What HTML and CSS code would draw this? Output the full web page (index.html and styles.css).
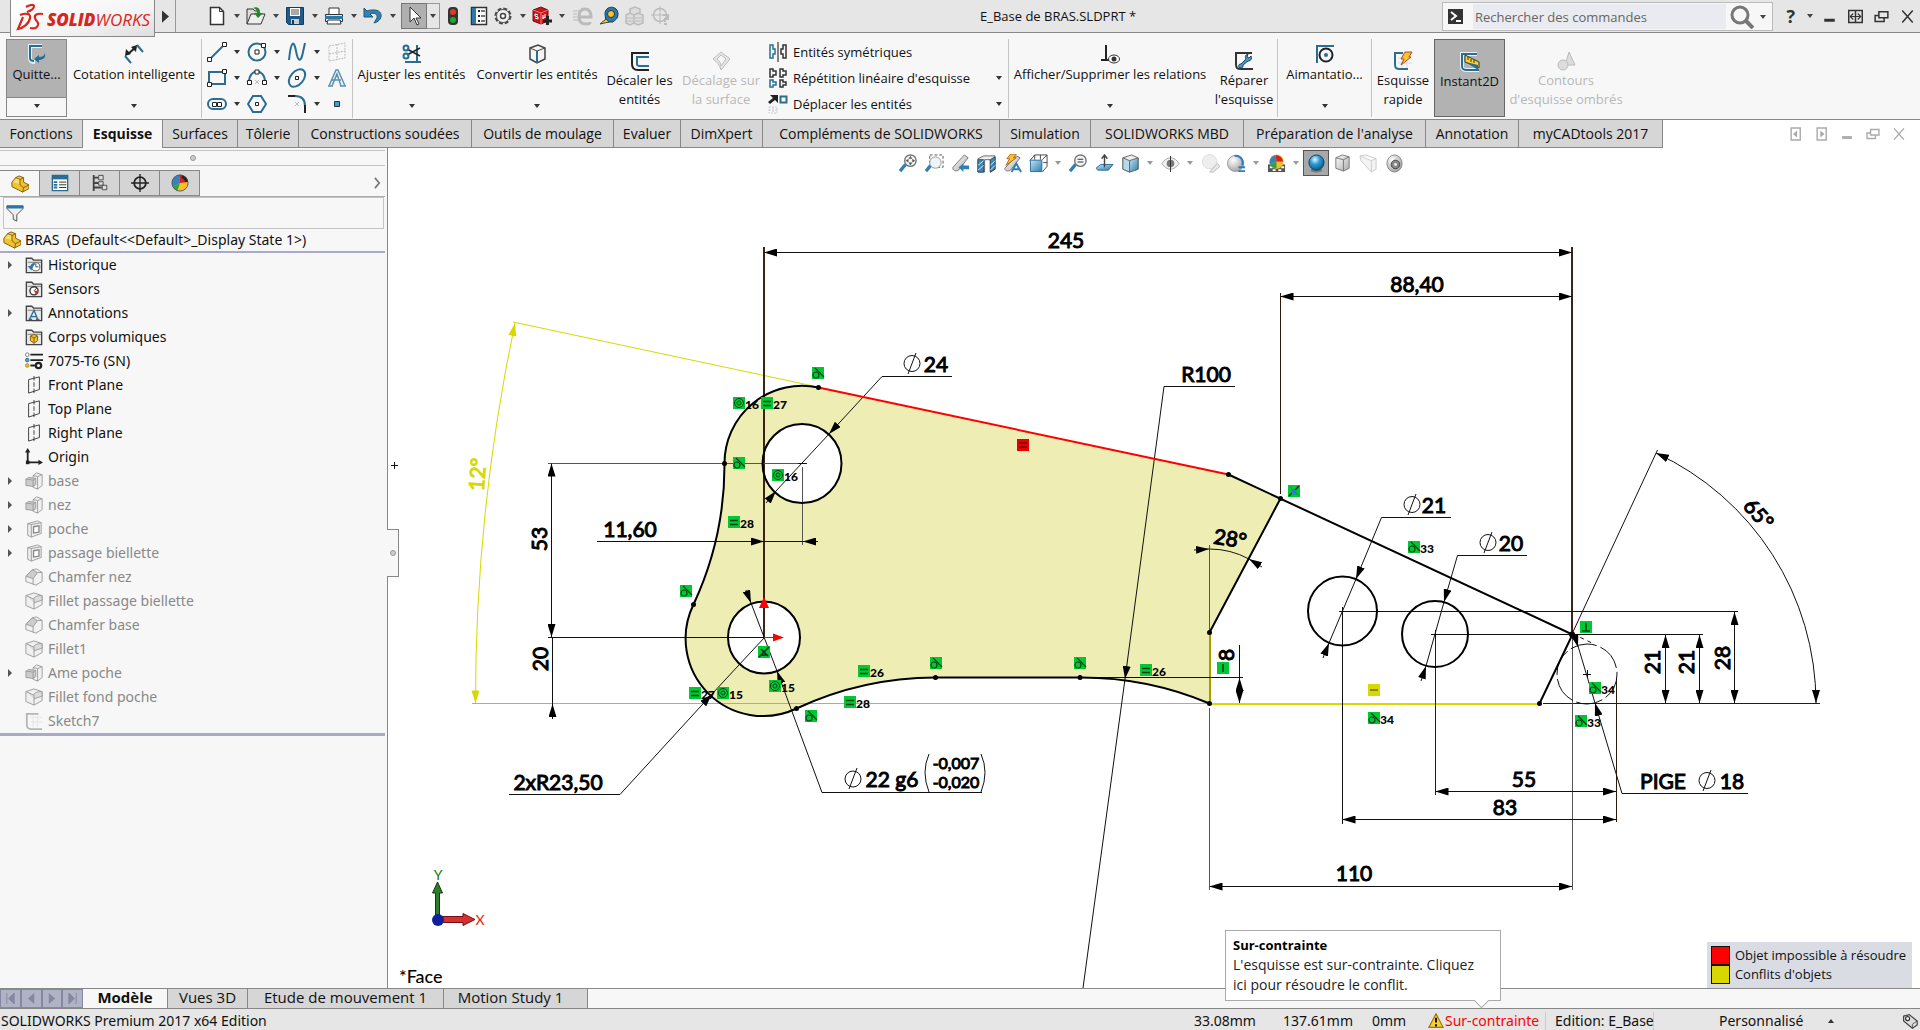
FILE: index.html
```html
<!DOCTYPE html>
<html lang="fr">
<head>
<meta charset="utf-8">
<title>E_Base de BRAS.SLDPRT</title>
<link rel="stylesheet" href="styles.css">
</head>
<body>
<svg class="defs" aria-hidden="true">
<defs>
<linearGradient id="metal" x1="0" y1="0" x2="1" y2="1"><stop offset="0" stop-color="#fff"/><stop offset="1" stop-color="#aaa"/></linearGradient>
<linearGradient id="sky" x1="0" y1="0" x2="1" y2="1"><stop offset="0" stop-color="#bfe4f7"/><stop offset="1" stop-color="#2b7fb0"/></linearGradient>
<radialGradient id="ball" cx=".4" cy=".3" r=".8"><stop offset="0" stop-color="#e8f8ff"/><stop offset=".4" stop-color="#2b9ad6"/><stop offset="1" stop-color="#054a7c"/></radialGradient>
<radialGradient id="gball" cx=".35" cy=".3" r=".8"><stop offset="0" stop-color="#fff"/><stop offset="1" stop-color="#999"/></radialGradient>
<symbol id="dd" viewBox="0 0 6 4"><path d="M0 0h6L3 4z" fill="currentColor"/></symbol>
<symbol id="new" viewBox="0 0 20 20"><path d="M3.500 1.500h9l4 4v13h-13z" fill="#fff" stroke="#333" stroke-width="1.500"/><path d="M12.500 1.500v4h4" fill="none" stroke="#333"/></symbol>
<symbol id="open" viewBox="0 0 20 20"><path d="M1 18V3h6l2 2h3v2" fill="#ddd" stroke="#333"/><path d="M1 18L5 8h14l-4 10z" fill="#eee" stroke="#333"/><path d="M7 2c5-2 7 0 7 5h3l-5 5-4-5h3c0-3-1-4-4-5z" fill="#1f8a1f"/></symbol>
<symbol id="save" viewBox="0 0 20 20"><path d="M1.500 1.500h17v17h-15l-2-2z" fill="#1f5a88" stroke="#133b5c"/><path d="M5 2h10v8H5z" fill="#fff"/><path d="M6 4h8M6 6h8M6 8h8" stroke="#555"/><path d="M6 13h8v5H6z" fill="#ccc"/><path d="M7 14h2v4H7z" fill="#133b5c"/></symbol>
<symbol id="print" viewBox="0 0 20 20"><path d="M5 8V2h10v6" fill="#fff" stroke="#333"/><path d="M1.500 8.500h17v7h-17z" fill="#e6e6e6" stroke="#333"/><path d="M1 10h18v3H1z" fill="#2b78ab"/><path d="M4 14h12l1 4H3z" fill="#fff" stroke="#333"/></symbol>
<symbol id="undo" viewBox="0 0 20 20"><path d="M1 2v9h9L7 8c4-2 8 0 7 4l-3 5c9-2 10-13 0-13-3 0-5 0-7 1z" fill="#3182b5" stroke="#1d5678"/></symbol>
<symbol id="cursor" viewBox="0 0 20 20"><path d="M6 1v15l4-4 3 7 2-1-3-6h5z" fill="#fff" stroke="#333"/></symbol>
<symbol id="light" viewBox="0 0 20 20"><rect x="5" y="1" width="10" height="18" rx="4" fill="#333"/><circle cx="10" cy="6" r="3" fill="#e03a28"/><circle cx="10" cy="14" r="3" fill="#27a52c"/></symbol>
<symbol id="list" viewBox="0 0 20 20"><path d="M2.500 1.500h15v17h-15z" fill="#fff" stroke="#333" stroke-width="1.500"/><path d="M3 2h4v16H3z" fill="#2b78ab"/><path d="M9 5h2M9 10h2M9 15h2" stroke="#222" stroke-width="2"/><path d="M12 5h4M12 10h4M12 15h4" stroke="#777" stroke-width="2"/></symbol>
<symbol id="gear" viewBox="0 0 20 20"><circle cx="10" cy="10" r="7.500" fill="none" stroke="#444" stroke-width="2" stroke-dasharray="4 1.900"/><circle cx="10" cy="10" r="6.500" fill="#f0f0f0" stroke="#555"/><circle cx="10" cy="10" r="2.500" fill="#fff" stroke="#444" stroke-width="1.500"/></symbol>
<symbol id="swcube" viewBox="0 0 20 20"><path d="M1 4l8-3 7 3v11l-7 3-8-3z" fill="#c8151b" stroke="#7a0c10"/><path d="M1 4l8 3 7-3M9 7v11" fill="none" stroke="#ee7a7a"/><path d="M6 9L3 8v2l3 1v2l-3-1M11 9v4l1-2 1 1v-4" fill="none" stroke="#fff"/><path d="M11 15h9M15.500 10v9" stroke="#222" stroke-width="3"/></symbol>
<symbol id="ee" viewBox="0 0 20 20"><path d="M7 11h11c0-5-2-8-6-8s-6 3-6 8 3 7 7 7 4-2 4-2" fill="none" stroke="#bbb" stroke-width="3"/><path d="M0 5h6M0 8h4M0 11h4M0 14h5" stroke="#bbb"/></symbol>
<symbol id="tape" viewBox="0 0 20 20"><path d="M6 8c0-9 13-9 13 0 0 5-3 6-5 8H7z" fill="#2b78ab" stroke="#133b5c"/><circle cx="12" cy="8" r="3.500" fill="#f5c431" stroke="#333"/><path d="M1 18l6-5 3 3z" fill="#f5c431" stroke="#444"/></symbol>
<symbol id="cubes" viewBox="0 0 20 20"><path d="M1 9l4-2 4 2v8l-4 2-4-2zM9 9l4-2 5 2v8l-5 2-4-2zM5 7V3l5-2 5 2v4" fill="#ddd" stroke="#bbb" stroke-width="1.500"/><path d="M2 12h6M2 15h6M10 12h7M10 15h7" stroke="#bbb"/></symbol>
<symbol id="target" viewBox="0 0 20 20"><circle cx="9" cy="9" r="6.500" fill="none" stroke="#bbb" stroke-width="1.500"/><path d="M9 0v18M0 9h18" stroke="#bbb"/><path d="M12 9h5v4h-3v3M13 18h3" fill="none" stroke="#bbb" stroke-width="2"/></symbol>

<symbol id="exit" viewBox="0 0 20 20"><path d="M15 2H3v12c0 3 1 4 5 4" fill="none" stroke="#e7f2f8" stroke-width="4"/><path d="M15 2H3v12c0 2 1 3 4 3" fill="none" stroke="#2a6d93" stroke-width="2"/><path d="M18 9c1 5-2 7-6 7v3l-5-4 5-4v2c3 0 5-1 6-4z" fill="#2a6d93"/></symbol>
<symbol id="smartdim" viewBox="0 0 20 20"><path d="M1 12l6 7M13 1l6 7" stroke="#2a6d93" stroke-width="2"/><path d="M4 10l8-7" stroke="#222" stroke-width="2"/><path d="M1 12l1-7 5 5zM13 1l-1 7-5-5z" fill="#222"/></symbol>
<symbol id="line" viewBox="0 0 20 20"><path d="M3 17L17 3" stroke="#2a6d93" stroke-width="2"/><path d="M.500 15.500h4v4h-4zM15.500.500h4v4h-4z" fill="#fff" stroke="#222"/></symbol>
<symbol id="circle" viewBox="0 0 20 20"><circle cx="10" cy="10" r="8.500" fill="none" stroke="#2a6d93" stroke-width="2"/><path d="M8 8h4v4H8zM14.500 1.500h4v4h-4z" fill="#fff" stroke="#222"/></symbol>
<symbol id="spline" viewBox="0 0 20 20"><path d="M2 18C4-2 7-2 9 9s5 12 7 1l2-9" fill="none" stroke="#2a6d93" stroke-width="2"/></symbol>
<symbol id="gplane" viewBox="0 0 20 20"><path d="M2 4l16-3v15L2 19zM10 2v16M2 12l16-3" fill="none" stroke="#bbb" stroke-dasharray="2 1"/></symbol>
<symbol id="rect" viewBox="0 0 20 20"><path d="M2 4h16v12H2z" fill="none" stroke="#2a6d93" stroke-width="2"/><path d="M.500 14.500h4v4h-4zM15.500 1.500h4v4h-4z" fill="#fff" stroke="#222"/></symbol>
<symbol id="arc" viewBox="0 0 20 20"><path d="M2 14C2 0 18 0 18 14" fill="none" stroke="#2a6d93" stroke-width="2"/><path d="M.500 12.500h4v4h-4zM15.500 12.500h4v4h-4zM8 2h4v4H8z" fill="#fff" stroke="#222"/><path d="M8 12l4 4m0-4l-4 4" stroke="#bbb"/></symbol>
<symbol id="ellipse" viewBox="0 0 20 20"><ellipse cx="10" cy="10" rx="10" ry="6.500" transform="rotate(-50 10 10)" fill="none" stroke="#2a6d93" stroke-width="2"/><path d="M8.500 8.500h3v3h-3z" fill="#fff" stroke="#222"/></symbol>
<symbol id="texta" viewBox="0 0 20 20"><path d="M2 18L9 2h2l7 16M1 18h5M13 18h6M5 12h9M5 18L10 6l4 12" fill="none" stroke="#5a93b5" stroke-width="1.500"/></symbol>
<symbol id="slot" viewBox="0 0 20 20"><rect x="1" y="5" width="18" height="10" rx="5" fill="none" stroke="#2a6d93" stroke-width="2"/><path d="M5.500 8.500h4v4h-4zM10.500 8.500h4v4h-4z" fill="#fff" stroke="#222"/></symbol>
<symbol id="hex" viewBox="0 0 20 20"><path d="M6 2h8l5 8-5 8H6l-5-8z" fill="none" stroke="#2a6d93" stroke-width="2"/><path d="M8.500 8.500h3v3h-3z" fill="#fff" stroke="#222"/></symbol>
<symbol id="fillet" viewBox="0 0 20 20"><path d="M1 2h8" stroke="#222" stroke-width="2"/><path d="M8 2c7 0 10 3 10 10" fill="none" stroke="#2a6d93" stroke-width="2"/><path d="M18 11v8" stroke="#222" stroke-width="2"/><path d="M8 8l4 4m0-4l-4 4" stroke="#bbb"/></symbol>
<symbol id="point" viewBox="0 0 20 20"><path d="M7.500 7.500h5v5h-5z" fill="#4a9cc8" stroke="#173a4e"/></symbol>
<symbol id="trim" viewBox="0 0 20 20"><path d="M3 18h16M15 1v18" stroke="#2a6d93" stroke-width="2"/><path d="M5 5l13 7M5 11l13-7" stroke="#222" stroke-width="1.500"/><circle cx="4" cy="4" r="2.500" fill="none" stroke="#2a6d93" stroke-width="2"/><circle cx="4" cy="12" r="2.500" fill="none" stroke="#2a6d93" stroke-width="2"/></symbol>
<symbol id="convert" viewBox="0 0 20 20"><path d="M3 4l8-3 7 3v11l-8 4-7-4z" fill="#f4f4f4" stroke="#444" stroke-width="1.500"/><path d="M3 4l7 3 8-3" fill="none" stroke="#444"/><path d="M10 7v12" stroke="#2a6d93" stroke-width="2"/></symbol>
<symbol id="offset" viewBox="0 0 20 20"><path d="M19 2H2v11c0 4 2 6 6 6h11" fill="none" stroke="#222" stroke-width="2"/><path d="M19 6H7v7c0 2 1 2 3 2h9" fill="none" stroke="#2a6d93" stroke-width="2"/></symbol>
<symbol id="offsurf" viewBox="0 0 20 20"><path d="M2 8l8-7 9 7-9 11C9 14 6 11 2 8z" fill="#e6e6e6" stroke="#bbb"/><path d="M6 8l4-4 5 4-5 7c0-3-2-5-4-7z" fill="#f7f7f7" stroke="#bbb"/></symbol>
<symbol id="mirror" viewBox="0 0 20 20"><path d="M10 0v20" stroke="#111"/><path d="M2 3h3v4h2v5H5v4H2z" fill="none" stroke="#2a6d93" stroke-width="1.500"/><path d="M18 3h-3v4h-2v5h2v4h3z" fill="none" stroke="#333" stroke-width="1.500"/></symbol>
<symbol id="pattern" viewBox="0 0 20 20"><path d="M2 1h3v2h3v4H5v2H2zM12 1h3v2h3v4h-3v2h-3zM12 12h3v2h3v3h-3v2h-3z" fill="none" stroke="#333" stroke-width="1.500"/><path d="M2 12h3v2h3v3H5v2H2z" fill="none" stroke="#2a6d93" stroke-width="1.500"/></symbol>
<symbol id="move" viewBox="0 0 20 20"><path d="M12.500 2.500h6v6h-6z" fill="#fff" stroke="#2a6d93" stroke-width="2"/><path d="M2 1h8v8L7 6l-5 4-2-2 5-4z" fill="#222"/><path d="M1 13h8v6H1zM5 13v6M1 16h8" fill="none" stroke="#ccc" stroke-dasharray="2 1"/></symbol>
<symbol id="rel" viewBox="0 0 20 20"><path d="M6 1v15M1 16h10" stroke="#222" stroke-width="2"/><ellipse cx="14" cy="15" rx="5.500" ry="4" fill="#fff" stroke="#333"/><circle cx="14" cy="15" r="2.500" fill="#333"/></symbol>
<symbol id="repair" viewBox="0 0 20 20"><path d="M18 2H2v11c0 4 1 5 5 5h12" fill="none" stroke="#333" stroke-width="2"/><path d="M14 3c-3 1-3 3-2 5l-5 5c-3 0-3 3-1 4 3 0 3-1 3-3l5-4c3 0 4-2 3-5l-2 2-2-1z" fill="#4a9cc8" stroke="#17445e"/></symbol>
<symbol id="snap" viewBox="0 0 20 20"><path d="M2 19V2h17" fill="none" stroke="#2a6d93" stroke-width="2"/><circle cx="11" cy="11" r="6.500" fill="none" stroke="#222" stroke-width="2"/><circle cx="11" cy="11" r="2" fill="#2a6d93"/></symbol>
<symbol id="rapid" viewBox="0 0 20 20"><path d="M5 7h14M5 12h14M9 3v16M14 3v16" stroke="#d5dde2"/><path d="M10 2H2v11c0 4 1 5 5 5h8" fill="none" stroke="#2a6d93" stroke-width="2"/><path d="M12 1h7l-3 5h2L8 14l3-6H8z" fill="#f5c431" stroke="#b4481f"/></symbol>
<symbol id="instant" viewBox="0 0 20 20"><path d="M17 2H2v12c0 3 1 4 5 4h12" fill="none" stroke="#e7f2f8" stroke-width="4"/><path d="M17 2H2v12c0 3 1 4 5 4h12" fill="none" stroke="#2a6d93" stroke-width="2"/><path d="M5 3l14 7v6L5 10z" fill="#f5d331" stroke="#333"/><path d="M8 5v3M11 7v3M14 8v3" stroke="#333"/><path d="M6 10l12 8v-5z" fill="#2a6d93"/></symbol>
<symbol id="shaded" viewBox="0 0 20 20"><path d="M13 1l6 13H9z" fill="#ddd" stroke="#bbb"/><circle cx="7" cy="14" r="5" fill="#ddd" stroke="#bbb"/></symbol>

<symbol id="part" viewBox="0 0 20 20"><path d="M1 8l4-5 4-2 5 2v5l6 3v4l-7 4L1 13z" fill="#f2c230" stroke="#7a5b0c"/><path d="M5 3l5 2 4-2M10 5v6l4 3 6-3M14 14l-1 5" fill="none" stroke="#7a5b0c"/><path d="M2 8l4-4 3 1v5z" fill="#f9dd71"/></symbol>
<symbol id="props" viewBox="0 0 20 20"><path d="M1.500 1.500h17v17h-17z" fill="#fff" stroke="#2a6d93" stroke-width="1.500"/><path d="M1 2h18v4H1z" fill="#2a6d93"/><path d="M3 9h4M3 12h4M3 15h4" stroke="#2a6d93" stroke-width="2"/><path d="M9 9h8M9 12h8M9 15h8" stroke="#222"/></symbol>
<symbol id="config" viewBox="0 0 20 20"><path d="M3 1v18M3 4h5M3 15h9M3 10h5" stroke="#444" stroke-width="2"/><path d="M8.500 1.500h5v5h-5zM8.500 8.500h5v4h-5zM12.500 12.500h5v5h-5z" fill="#ddd" stroke="#444"/></symbol>
<symbol id="dimx" viewBox="0 0 20 20"><circle cx="10" cy="10" r="6.500" fill="none" stroke="#222" stroke-width="2"/><path d="M10 0v20M0 10h20" stroke="#222" stroke-width="1.500"/></symbol>
<symbol id="disp" viewBox="0 0 20 20"><circle cx="10" cy="10" r="9" fill="#f3c02c"/><path d="M10 10L2 14A9 9 0 0 1 9 1z" fill="#3a7fc4"/><path d="M10 10L9 1a9 9 0 0 1 10 8z" fill="#d8201e"/><path d="M10 10l-8 4a9 9 0 0 0 5 5z" fill="#2da641"/><circle cx="10" cy="10" r="9" fill="none" stroke="#555"/><path d="M12 3c4 1 5 3 5 6" stroke="#222" stroke-width="3" fill="none"/></symbol>
<symbol id="funnel" viewBox="0 0 20 20"><path d="M1 2h18v3l-7 7v7l-4-2v-5L1 5z" fill="#eee" stroke="#444"/><path d="M1 2h18v3H1z" fill="#2a78a8"/></symbol>
<symbol id="folder" viewBox="0 0 20 20"><path d="M1.500 18.500v-16h6l2 2h9v14z" fill="#e8e8e8" stroke="#444" stroke-width="1.500"/><path d="M3 7h15" stroke="#777"/></symbol>
<symbol id="hist" viewBox="0 0 20 20"><use href="#folder"/><circle cx="12" cy="12" r="4.500" fill="#fff" stroke="#555"/><path d="M12 9v3h3" stroke="#444" fill="none"/><path d="M3 11l4 5 2-4c1-2 2-3 4-3-4-2-6 0-7 2z" fill="#2a78a8"/></symbol>
<symbol id="sens" viewBox="0 0 20 20"><use href="#folder"/><circle cx="10" cy="12" r="4.500" fill="#fff" stroke="#333" stroke-width="1.500"/><path d="M10 12l3-3" stroke="#222"/><path d="M10 12h4a4 4 0 0 1-2 4z" fill="#d8321e"/></symbol>
<symbol id="anno" viewBox="0 0 20 20"><use href="#folder"/><path d="M5 17l5-10 4 10M4 17h4M12 17h4M7 14h6" fill="none" stroke="#2a6d93" stroke-width="1.500"/></symbol>
<symbol id="body" viewBox="0 0 20 20"><use href="#folder"/><path d="M6 9l4-2 4 2v5l-4 3-4-3z" fill="#f2c230" stroke="#7a5b0c"/><path d="M6 9l4 2 4-2M10 11v6" stroke="#7a5b0c" fill="none"/></symbol>
<symbol id="mat" viewBox="0 0 20 20"><path d="M6 3h14M6 9h14M6 15h5" stroke="#222" stroke-width="2"/><circle cx="2.500" cy="3" r="2" fill="#fff" stroke="#777"/><circle cx="2.500" cy="9" r="2" fill="#4aa0d8" stroke="#2a6d93"/><circle cx="2.500" cy="15" r="2" fill="#f2c230" stroke="#b08a10"/><circle cx="15" cy="15" r="3" fill="none" stroke="#222" stroke-width="2.500"/></symbol>
<symbol id="plane" viewBox="0 0 20 20"><path d="M4 4l12-3v14L4 19z" fill="none" stroke="#333"/><path d="M10 0v20" stroke="#333" stroke-dasharray="5 2"/></symbol>
<symbol id="orig" viewBox="0 0 20 20"><path d="M3 3v13h13" fill="none" stroke="#222" stroke-width="2"/><path d="M0 5l3-5 3 5zM15 13l5 3-5 3z" fill="#222"/><path d="M1 14h4v4H1z" fill="#222"/></symbol>
<symbol id="boss" viewBox="0 0 20 20"><path d="M9 4l4-3 6 2v12l-5 4-5-2z" fill="#f2f2f2" stroke="#999"/><path d="M14 5l5-2M14 5v14M9 4l5 1" stroke="#999" fill="none"/><path d="M1 8l3-2 8 1v7l-3 2-8-1z" fill="#ccc" stroke="#999"/><path d="M1 8l8 1 3-2M9 9v7" stroke="#999" fill="none"/></symbol>
<symbol id="cut" viewBox="0 0 20 20"><path d="M3 4l11-3 4 2v12l-11 4-4-2z" fill="#eee" stroke="#999"/><path d="M7 5v14M3 4l4 1 11-2" stroke="#999" fill="none"/><path d="M9.500 7.500l6-1v7l-6 1z" fill="#fff" stroke="#888" stroke-width="1.500"/></symbol>
<symbol id="cham" viewBox="0 0 20 20"><path d="M1 9l7-7 5-1 6 4v10l-7 4-11-4z" fill="#f2f2f2" stroke="#999"/><path d="M1 9l7-7 6 3-5 7z" fill="#ccc" stroke="#999"/><path d="M9 12v6M14 5l5 0" stroke="#999"/></symbol>
<symbol id="fil" viewBox="0 0 20 20"><path d="M1 4l9-3 9 3v10l-9 5-9-4z" fill="#f0f0f0" stroke="#999"/><path d="M10 8v11M1 4l9 4c0-3 3-4 9-4v5l-9 3" fill="#ddd" stroke="#999"/></symbol>
<symbol id="sk" viewBox="0 0 20 20"><path d="M6 6h13M6 11h13M9 3v14M14 3v14" stroke="#e4e4e4"/><path d="M15 2H2v12c0 4 2 5 5 5h12" fill="none" stroke="#b5b5b5" stroke-width="2"/></symbol>

<symbol id="vfit" viewBox="0 0 20 20"><path d="M1 18l6-7" stroke="#2f7fb5" stroke-width="3.500"/><circle cx="12" cy="7" r="6" fill="#f3f6f8" stroke="#777" stroke-width="1.500"/><path d="M12 2l2 3h-4zM12 12l2-3h-4zM7 7l3-2v4zM17 7l-3-2v4z" fill="#555"/></symbol>
<symbol id="varea" viewBox="0 0 20 20"><path d="M5 1h14v13H5z" fill="none" stroke="#555" stroke-dasharray="3 2"/><path d="M1 18l5-6" stroke="#2f7fb5" stroke-width="3.500"/><circle cx="11" cy="9" r="6" fill="#eef4f8" stroke="#999"/></symbol>
<symbol id="vprev" viewBox="0 0 20 20"><path d="M2 14L14 1l4 3L8 17c-3 2-7 0-6-3z" fill="url(#metal)" stroke="#777"/><path d="M8 14l5-4v2h6v4h-6v3z" fill="#2f7fb5"/></symbol>
<symbol id="vsect" viewBox="0 0 20 20"><path d="M1 5l6-3 12 0v14l-5 3V6H8v13H1z" fill="#eee" stroke="#666"/><path d="M1 6h6v13H1zM14 6l5-3v13l-5 3z" fill="#3a88b8" stroke="#264f68"/><path d="M1 12l6-5M1 17l6-5M14 12l5-5M14 17l5-5" stroke="#d6e9f3"/></symbol>
<symbol id="vdyn" viewBox="0 0 20 20"><path d="M2 15L14 2l4 2L8 17c-3 2-7 0-6-2z" fill="url(#metal)" stroke="#777"/><path d="M8 0h6l-3 4h3L3 12l4-7H4z" fill="#f5c431" stroke="#b4661f"/><path d="M9 19l5-9 5 9M11 16h6" fill="none" stroke="#2f7fb5" stroke-width="2"/></symbol>
<symbol id="vorient" viewBox="0 0 20 20"><path d="M1 7l5-6h13v12l-5 6" fill="#fff" stroke="#444"/><path d="M14 6l5-5M6 1v5M12 1v5M15 9h4" stroke="#444"/><path d="M1.500 6.500h12v12h-12z" fill="url(#sky)" stroke="#2a6d93"/></symbol>
<symbol id="vsel" viewBox="0 0 20 20"><path d="M1 18l6-7" stroke="#2f7fb5" stroke-width="3.500"/><circle cx="12" cy="7" r="6" fill="#f3f6f8" stroke="#777" stroke-width="1.500"/><path d="M9 5h6v1H9zM9 8h6v1H9z" fill="#333"/></symbol>
<symbol id="vnorm" viewBox="0 0 20 20"><path d="M1 15l5-4h13l-5 6H3z" fill="url(#sky)" stroke="#2a6d93"/><path d="M10 14V2M7 5l3-4 3 4" fill="none" stroke="#444" stroke-width="1.500"/></symbol>
<symbol id="vcube" viewBox="0 0 20 20"><path d="M2 4l9-3 7 3v12l-9 3-7-3z" fill="#eee" stroke="#666"/><path d="M2 4l7 3v12l-7-3z" fill="#b7d9ea" stroke="#666"/><path d="M9 7l9-3v12l-9 3z" fill="url(#sky)" stroke="#666"/></symbol>
<symbol id="veye" viewBox="0 0 20 20"><path d="M1 10c5-8 13-8 18 0-5 8-13 8-18 0z" fill="#f1f1f1" stroke="#aaa"/><circle cx="10" cy="10" r="4" fill="#777"/><path d="M10 2v17" stroke="#333"/></symbol>
<symbol id="vpen" viewBox="0 0 20 20"><circle cx="9" cy="8" r="7.500" fill="#eee" stroke="#ddd"/><path d="M9 19l8-9 3 3-7 6z" fill="#e6e6e6" stroke="#bbb"/></symbol>
<symbol id="vscene" viewBox="0 0 20 20"><circle cx="9" cy="10" r="8.500" fill="url(#gball)" stroke="#999"/><path d="M8 2c7-1 10 6 8 10" fill="none" stroke="#2f7fb5" stroke-width="2"/><path d="M12 14h7M12 18h7" stroke="#2f7fb5" stroke-width="2"/></symbol>
<symbol id="vapp" viewBox="0 0 20 20"><path d="M1 11h18v8H1z" fill="#555"/><path d="M3 13h3v2H3zM9 13h3v2H9zM15 13h3v2h-3zM6 16h3v2H6zM12 16h3v2h-3z" fill="#fff"/><circle cx="10" cy="8" r="7.500" fill="#f3c02c"/><path d="M10 8L3 11A8 8 0 0 1 9 1z" fill="#3a7fc4"/><path d="M10 8L9 1a8 8 0 0 1 8 7z" fill="#d8201e"/><path d="M10 8l-7 3a8 8 0 0 0 7 4z" fill="#2da641"/></symbol>
<symbol id="vball" viewBox="0 0 20 20"><ellipse cx="10" cy="17" rx="6" ry="2.500" fill="#777"/><circle cx="10" cy="9" r="8" fill="url(#ball)" stroke="#0b4468"/></symbol>
<symbol id="vgray" viewBox="0 0 20 20"><path d="M3 4l7-3 7 2v12l-6 3-8-3z" fill="url(#metal)" stroke="#777"/><path d="M11 6v12M3 4l8 2 6-3" stroke="#777" fill="none"/></symbol>
<symbol id="vpersp" viewBox="0 0 20 20"><path d="M1 2l12 5v12L2 7zM13 7l5-2v11l-5 3M1 2l6-1 11 4" fill="#f3f3f3" stroke="#ccc"/></symbol>
<symbol id="vcam" viewBox="0 0 20 20"><ellipse cx="10" cy="10" rx="8" ry="9" fill="url(#gball)" stroke="#888"/><circle cx="11" cy="11" r="4.500" fill="#888" stroke="#444"/><circle cx="11" cy="11" r="1.500" fill="#eee"/></symbol>
<symbol id="warn" viewBox="0 0 20 20"><path d="M10 1l9 17H1z" fill="#f7cf2f" stroke="#a2780c" stroke-width="1.500"/><path d="M10 6v6M10 14v3" stroke="#111" stroke-width="2.500"/></symbol>
<symbol id="tag" viewBox="0 0 20 20"><path d="M2 4l7-2 10 8v5l-6 4L2 10z" fill="#ddd" stroke="#444" stroke-width="1.500"/><circle cx="7" cy="7" r="2.500" fill="#fff" stroke="#333" stroke-width="1.500"/><path d="M13 19v-5l6-4" fill="none" stroke="#444"/></symbol>
<symbol id="restore" viewBox="0 0 20 20"><path d="M6.500 3.500h12v8h-12zM6.500 8.500h-5v8h12v-5" fill="none" stroke="currentColor" stroke-width="2"/></symbol>
<symbol id="close" viewBox="0 0 20 20"><path d="M3 2l14 16M17 2L3 18" stroke="currentColor" stroke-width="2"/></symbol>
<symbol id="mini" viewBox="0 0 20 20"><path d="M3 13h14v4H3z" fill="currentColor"/></symbol>
<symbol id="span" viewBox="0 0 20 20"><path d="M1 2h18v16H1zM10 2v16" fill="none" stroke="currentColor" stroke-width="2"/><path d="M3 10h14M7 6l-4 4 4 4M13 6l4 4-4 4" fill="none" stroke="currentColor" stroke-width="1.500"/></symbol>

<marker id="ar" viewBox="0 0 13 8" refX="13" refY="4" markerWidth="13" markerHeight="8" markerUnits="userSpaceOnUse" orient="auto-start-reverse"><path d="M0 0l13 4-13 4z" fill="#000"/></marker>
<marker id="ay" viewBox="0 0 13 8" refX="13" refY="4" markerWidth="13" markerHeight="8" markerUnits="userSpaceOnUse" orient="auto-start-reverse"><path d="M0 0l13 4-13 4z" fill="#d8d800"/></marker>
<g id="b-tan"><path d="M0 0h12v12H0z" fill="#00c832"/><path d="M3 1l9 9" stroke="#143c1c" stroke-width="1.200"/><circle cx="4" cy="8" r="3" fill="none" stroke="#143c1c" stroke-width="1.200"/></g>
<g id="b-con"><path d="M0 0h12v12H0z" fill="#00c832"/><circle cx="6" cy="6" r="4.500" fill="none" stroke="#143c1c"/><circle cx="6" cy="6" r="2" fill="none" stroke="#143c1c"/></g>
<g id="b-eq"><path d="M0 0h12v12H0z" fill="#00c832"/><path d="M2 4.500h8M2 8.500h8" stroke="#143c1c" stroke-width="1.500"/></g>
<g id="b-coi"><path d="M0 0h12v12H0z" fill="#00c832"/><path d="M1 11L11 1M3 3l7 7M3 9h5" stroke="#0a2a10" stroke-width="1.500"/></g>
</defs>
</svg>

<header class="titlebar">
  <a class="logo" href="#" aria-label="SOLIDWORKS">
    <svg class="ds" viewBox="0 0 28 32" aria-hidden="true"><g fill="none" stroke="#d9261c" stroke-width="2.200"><path d="M10 5c3-2 8-3 8-1 0 3-4 5-7 6"/><path d="M4 13c5-2 11-2 10 3-1 6-7 10-12 11l5-12"/><path d="M27 12c-6-1-9 1-8 4 1 4 4 3 3 7-1 3-4 4-8 3"/></g></svg>
    <span class="wordmark"><b>SOLID</b>WORKS</span>
  </a>
  <button class="flyout" aria-label="Menu"><svg viewBox="0 0 8 14"><path d="M0 0l8 7-8 7z" fill="#333"/></svg></button>
  <nav class="quick" aria-label="Accès rapide">
    <button><svg><use href="#new"/></svg></button><button class="dd"><svg><use href="#dd"/></svg></button>
    <button><svg><use href="#open"/></svg></button><button class="dd"><svg><use href="#dd"/></svg></button>
    <button><svg><use href="#save"/></svg></button><button class="dd"><svg><use href="#dd"/></svg></button>
    <button><svg><use href="#print"/></svg></button><button class="dd"><svg><use href="#dd"/></svg></button>
    <button><svg><use href="#undo"/></svg></button><button class="dd"><svg><use href="#dd"/></svg></button>
    <button class="pressed"><svg><use href="#cursor"/></svg></button><button class="dd boxed"><svg><use href="#dd"/></svg></button>
    <button class="solo"><svg><use href="#light"/></svg></button>
    <button class="solo"><svg><use href="#list"/></svg></button>
    <button><svg><use href="#gear"/></svg></button><button class="dd"><svg><use href="#dd"/></svg></button>
    <button><svg><use href="#swcube"/></svg></button><button class="dd"><svg><use href="#dd"/></svg></button>
    <button class="solo"><svg><use href="#ee"/></svg></button>
    <button class="solo"><svg><use href="#tape"/></svg></button>
    <button class="solo"><svg><use href="#cubes"/></svg></button>
    <button class="solo"><svg><use href="#target"/></svg></button>
  </nav>
  <h1 class="doc">E_Base de BRAS.SLDPRT *</h1>
  <form class="search">
    <svg class="prompt" viewBox="0 0 15 15"><path d="M0 0h15v15H0z" fill="#333"/><path d="M3 3l5 4-5 4M8 12h5" fill="none" stroke="#fff" stroke-width="2"/></svg>
    <input type="text" placeholder="Rechercher des commandes" aria-label="Rechercher des commandes">
    <button type="button" class="go" aria-label="Rechercher"><svg viewBox="0 0 24 24"><circle cx="10" cy="10" r="8" fill="none" stroke="#777" stroke-width="3"/><path d="M16 16l7 7" stroke="#777" stroke-width="4"/></svg></button>
    <button type="button" class="dd" aria-label="Options"><svg><use href="#dd"/></svg></button>
  </form>
  <div class="winbtns">
    <button class="help">?</button><button class="dd"><svg><use href="#dd"/></svg></button>
    <button aria-label="Réduire"><svg><use href="#mini"/></svg></button><button aria-label="Étendre"><svg><use href="#span"/></svg></button><button aria-label="Restaurer"><svg><use href="#restore"/></svg></button><button aria-label="Fermer"><svg><use href="#close"/></svg></button>
  </div>
</header>

<section class="ribbon" aria-label="Esquisse">
  <button class="tool quit"><svg class="ic"><use href="#exit"/></svg><span>Quitte...</span><svg class="more"><use href="#dd"/></svg></button>
  <button class="tool w134"><svg class="ic"><use href="#smartdim"/></svg><span>Cotation intelligente</span><svg class="more"><use href="#dd"/></svg></button>
  <div class="palette">
    <button><svg class="ic"><use href="#line"/></svg><svg class="arrow"><use href="#dd"/></svg></button>
    <button><svg class="ic"><use href="#circle"/></svg><svg class="arrow"><use href="#dd"/></svg></button>
    <button><svg class="ic"><use href="#spline"/></svg><svg class="arrow"><use href="#dd"/></svg></button>
    <button><svg class="ic"><use href="#gplane"/></svg></button>
    <button><svg class="ic"><use href="#rect"/></svg><svg class="arrow"><use href="#dd"/></svg></button>
    <button><svg class="ic"><use href="#arc"/></svg><svg class="arrow"><use href="#dd"/></svg></button>
    <button><svg class="ic"><use href="#ellipse"/></svg><svg class="arrow"><use href="#dd"/></svg></button>
    <button><svg class="ic"><use href="#texta"/></svg></button>
    <button><svg class="ic"><use href="#slot"/></svg><svg class="arrow"><use href="#dd"/></svg></button>
    <button><svg class="ic"><use href="#hex"/></svg></button>
    <button><svg class="ic"><use href="#fillet"/></svg><svg class="arrow"><use href="#dd"/></svg></button>
    <button><svg class="ic"><use href="#point"/></svg></button>
  </div>
  <button class="tool w117"><svg class="ic"><use href="#trim"/></svg><span>Ajus<u>t</u>er les entités</span><svg class="more"><use href="#dd"/></svg></button>
  <button class="tool w134"><svg class="ic"><use href="#convert"/></svg><span>Convertir les entités</span><svg class="more"><use href="#dd"/></svg></button>
  <button class="tool two w71"><svg class="ic"><use href="#offset"/></svg><span>Décaler les<br>entités</span></button>
  <button class="tool two w92 off"><svg class="ic"><use href="#offsurf"/></svg><span>Décalage sur<br>la surface</span></button>
  <div class="rows">
    <button><svg class="ic"><use href="#mirror"/></svg><span>Entités symétriques</span></button>
    <button><svg class="ic"><use href="#pattern"/></svg><span>Répétition linéaire d'esquisse</span><svg class="arrow"><use href="#dd"/></svg></button>
    <button><svg class="ic"><use href="#move"/></svg><span>Déplacer les entités</span><svg class="arrow"><use href="#dd"/></svg></button>
  </div>
  <button class="tool w202"><svg class="ic"><use href="#rel"/></svg><span>Afficher/Supprimer les relations</span><svg class="more"><use href="#dd"/></svg></button>
  <button class="tool two w67 last"><svg class="ic"><use href="#repair"/></svg><span>Réparer<br>l'esquisse</span></button>
  <button class="tool w94 last"><svg class="ic"><use href="#snap"/></svg><span>Aimantatio...</span><svg class="more"><use href="#dd"/></svg></button>
  <button class="tool two w62"><svg class="ic"><use href="#rapid"/></svg><span>Esquisse<br>rapide</span></button>
  <button class="tool two w71 active"><svg class="ic"><use href="#instant"/></svg><span>Instant2D</span></button>
  <button class="tool two w122 off"><svg class="ic"><use href="#shaded"/></svg><span>Contours<br>d'esquisse ombrés</span></button>
</section>

<nav class="tabs">
  <div class="strip">
    <button>Fonctions</button><button class="on">Esquisse</button><button>Surfaces</button><button>Tôlerie</button><button>Constructions soudées</button><button>Outils de moulage</button><button>Evaluer</button><button>DimXpert</button><button>Compléments de SOLIDWORKS</button><button>Simulation</button><button>SOLIDWORKS MBD</button><button>Préparation de l'analyse</button><button>Annotation</button><button>myCADtools 2017</button>
  </div>
  <div class="docbtns">
    <button><svg viewBox="0 0 20 20"><path d="M4.500 1.500h13v17h-13z" fill="none" stroke="currentColor" stroke-width="2"/><path d="M13 5v10l-6-5z" fill="currentColor"/></svg></button>
    <button><svg viewBox="0 0 20 20"><path d="M4.500 1.500h13v17h-13z" fill="none" stroke="currentColor" stroke-width="2"/><path d="M9 5v10l6-5z" fill="currentColor"/></svg></button>
    <button><svg><use href="#mini"/></svg></button><button><svg><use href="#restore"/></svg></button><button><svg><use href="#close"/></svg></button>
  </div>
</nav>

<main class="work">
  <aside class="panel">
    <div class="grip"><i class="dot"></i></div>
    <div class="ptabs">
      <button class="on"><svg><use href="#part"/></svg></button><button><svg><use href="#props"/></svg></button><button><svg><use href="#config"/></svg></button><button><svg><use href="#dimx"/></svg></button><button><svg><use href="#disp"/></svg></button>
      <button class="next" aria-label="Suivant"><svg viewBox="0 0 8 14"><path d="M1 1l5 6-5 6" fill="none" stroke="#777" stroke-width="2"/></svg></button>
    </div>
    <label class="filter"><svg><use href="#funnel"/></svg><input type="text" aria-label="Filtre"></label>
    <div class="root"><svg><use href="#part"/></svg><span>BRAS&nbsp; (Default&lt;&lt;Default&gt;_Display State 1&gt;)</span></div>
    <ul class="tree">
      <li class="exp"><svg><use href="#hist"/></svg>Historique</li>
      <li><svg><use href="#sens"/></svg>Sensors</li>
      <li class="exp"><svg><use href="#anno"/></svg>Annotations</li>
      <li><svg><use href="#body"/></svg>Corps volumiques</li>
      <li><svg><use href="#mat"/></svg>7075-T6 (SN)</li>
      <li><svg><use href="#plane"/></svg>Front Plane</li>
      <li><svg><use href="#plane"/></svg>Top Plane</li>
      <li><svg><use href="#plane"/></svg>Right Plane</li>
      <li><svg><use href="#orig"/></svg>Origin</li>
      <li class="exp off"><svg><use href="#boss"/></svg>base</li>
      <li class="exp off"><svg><use href="#boss"/></svg>nez</li>
      <li class="exp off"><svg><use href="#cut"/></svg>poche</li>
      <li class="exp off"><svg><use href="#cut"/></svg>passage biellette</li>
      <li class="off"><svg><use href="#cham"/></svg>Chamfer nez</li>
      <li class="off"><svg><use href="#fil"/></svg>Fillet passage biellette</li>
      <li class="off"><svg><use href="#cham"/></svg>Chamfer base</li>
      <li class="off"><svg><use href="#fil"/></svg>Fillet1</li>
      <li class="exp off"><svg><use href="#boss"/></svg>Ame poche</li>
      <li class="off"><svg><use href="#fil"/></svg>Fillet fond poche</li>
      <li class="off"><svg><use href="#sk"/></svg>Sketch7</li>
    </ul>
  </aside>

  <section class="canvas">
    <svg class="drawing" viewBox="388 148 1532 840" preserveAspectRatio="xMinYMin meet">
      <path class="face" fill-rule="evenodd" d="M724.500 463.500A330 330 0 0 1 693.500 604.500A77.500 77.500 0 0 0 796.500 708.500A330 330 0 0 1 935.500 677.500H1080A330 330 0 0 1 1209.500 703.500V632.500L1280.500 498.500L1228.500 474.500L818.500 387.500A77.500 77.500 0 0 0 724.500 463.500zM841.500 463.500a39.500 39.500 0 1 1-79 0a39.500 39.500 0 1 1 79 0zM800 637.500a36 36 0 1 1-72 0a36 36 0 1 1 72 0z"/>
      <g class="yellow">
        <path d="M513 322L818 387"/><path d="M475.500 703.500A1828 1828 0 0 1 515 323" marker-start="url(#ay)" marker-end="url(#ay)"/>
        <path d="M472 703.500H1209" stroke="#c8bc00"/><path d="M1209 704H1540" stroke-width="2"/><path d="M1210 632V703" stroke="#a89c00" stroke-width="2"/>
      </g>
      <g class="thin">
        <path class="brown" d="M764 247V637M1572 247V634"/><path d="M1280.500 293V494M1435.500 638V795M1616.500 678V822M1543 703.500H1820" stroke="#2c1a0c"/>
        <path class="grey" d="M548 463.500H798M802.500 467V545M1209.500 545V632M1209.500 708V890M1572.500 638V890"/>
        <path d="M548 637.500H764M935 677.500H1243M1342.500 611V824M1339 611.500H1738M1431 634.500H1703M1342.500 607v9M1435.500 630v9M798 463.500h9M1583 674.500h8M1587.500 670v8"/>
        <path d="M764 252.500H1572" marker-start="url(#ar)" marker-end="url(#ar)"/>
        <path d="M1280.500 296.500H1572" marker-start="url(#ar)" marker-end="url(#ar)"/>
        <path d="M1209.500 886.500H1572" marker-start="url(#ar)" marker-end="url(#ar)"/>
        <path d="M1435.500 791.500H1616" marker-start="url(#ar)" marker-end="url(#ar)"/>
        <path d="M1342.500 819.500H1616" marker-start="url(#ar)" marker-end="url(#ar)"/>
        <path d="M551.500 463.500V637" marker-start="url(#ar)" marker-end="url(#ar)"/>
        <path d="M552.500 637V719"/><path d="M552.500 719V704" marker-end="url(#ar)"/>
        <path d="M597 541.500H764" marker-end="url(#ar)"/><path d="M764 541.500H818"/><path d="M818 541.500H803" marker-end="url(#ar)"/>
        <path d="M1665.500 635V703" marker-start="url(#ar)" marker-end="url(#ar)"/>
        <path d="M1699.500 635V703" marker-start="url(#ar)" marker-end="url(#ar)"/>
        <path d="M1734.500 612V703" marker-start="url(#ar)" marker-end="url(#ar)"/>
        <path d="M1239.500 645V678"/><path d="M1239.500 678V703" marker-start="url(#ar)" marker-end="url(#ar)"/>
        <path d="M1572 634L1657.500 450"/><path d="M1656 453A276 276 0 0 1 1816 703" marker-start="url(#ar)" marker-end="url(#ar)"/>
        <path d="M1194 550L1209 549" marker-end="url(#ar)"/><path d="M1209.500 549A83.500 83.500 0 0 1 1249 559"/><path d="M1262 567L1249 559" marker-end="url(#ar)"/>
        <path d="M952 376.500H882L829 434" marker-end="url(#ar)"/><path d="M829 434L776 491"/><path d="M766 503L776 491" marker-end="url(#ar)"/>
        <path d="M1235 386.500H1164L1125 679" marker-end="url(#ar)"/><path d="M1125 679L1083 988"/>
        <path d="M1451 517.500H1381.500L1356 579" marker-end="url(#ar)"/><path d="M1356 579L1329 643"/><path d="M1323 658L1329 643" marker-end="url(#ar)"/>
        <path d="M1527 555.500H1457.500L1444 602" marker-end="url(#ar)"/><path d="M1444 602L1426 666"/><path d="M1421 681L1426 666" marker-end="url(#ar)"/>
        <path d="M509 794.500H620L712 694" marker-end="url(#ar)"/><path d="M712 694L764 638"/>
        <path d="M982 792.500H822L777 671" marker-end="url(#ar)"/><path d="M777 671L751 603"/><path d="M746 590L751 603" marker-end="url(#ar)"/>
        <path d="M1748 793.500H1622L1595 703" marker-end="url(#ar)"/><path d="M1595 703L1575 636"/><path d="M1574 633L1578 647" marker-end="url(#ar)"/>
        <circle cx="1587" cy="674" r="30" stroke-dasharray="27 4"/><path d="M1573 634L1592 643" stroke-dasharray="4 4"/>
        <path d="M929 754q-8 18 0 38M981 754q8 18 0 38M391 465.500h7M394.500 462v7"/>
      </g>
      <g class="thick">
        <path d="M818.500 387.500A77.500 77.500 0 0 0 724.500 463.500A330 330 0 0 1 693.500 604.500A77.500 77.500 0 0 0 796.500 708.500A330 330 0 0 1 935.500 677.500H1080A330 330 0 0 1 1209.500 703.500M1209.500 632.500L1280.500 498.500M1228.500 474.500L1572.500 634.500L1539.500 703.500"/>
        <circle cx="802" cy="463.500" r="39.500"/><circle cx="764" cy="637.500" r="36"/><circle cx="1342.500" cy="611" r="34.500"/><circle cx="1435" cy="634" r="33"/>
        <path d="M818.500 387.500L1228.500 474.500" stroke="#f00"/>
      </g>
      <g fill="#f00"><path d="M764 597l5 11h-10zM784 637.500l-11-4v8z"/><path d="M764 637.500h12" stroke="#f00"/></g>
      <g fill="#000"><circle cx="818.500" cy="387.500" r="2.500"/><circle cx="724.500" cy="463.500" r="2.500"/><circle cx="693.500" cy="604.500" r="2.500"/><circle cx="796.500" cy="708.500" r="2.500"/><circle cx="935.500" cy="677.500" r="2.500"/><circle cx="1080" cy="677.500" r="2.500"/><circle cx="1209.500" cy="703.500" r="2.500"/><circle cx="1209.500" cy="632.500" r="2.500"/><circle cx="1280.500" cy="498.500" r="2.500"/><circle cx="1228.500" cy="474.500" r="2.500"/><circle cx="1572" cy="634.500" r="3"/><circle cx="1539.500" cy="703.500" r="2.500"/></g>
      <g class="badges">
        <use href="#b-tan" x="812" y="367"/><use href="#b-con" x="733" y="397"/><use href="#b-eq" x="761" y="397"/><use href="#b-tan" x="733" y="457"/><use href="#b-con" x="772" y="469"/><use href="#b-eq" x="728" y="516"/><use href="#b-tan" x="680" y="585"/><use href="#b-coi" x="758" y="646"/><use href="#b-eq" x="689" y="687"/><use href="#b-con" x="717" y="687"/><use href="#b-con" x="769" y="680"/><use href="#b-eq" x="858" y="665"/><use href="#b-eq" x="844" y="696"/><use href="#b-tan" x="805" y="710"/><use href="#b-tan" x="930" y="657"/><use href="#b-tan" x="1074" y="657"/><use href="#b-eq" x="1140" y="664"/><use href="#b-tan" x="1368" y="712"/><use href="#b-tan" x="1408" y="541"/><use href="#b-tan" x="1589" y="682"/><use href="#b-tan" x="1575" y="715"/>
        <path d="M1217 662h12v12h-12zM1288 485h12v12h-12zM1580 621h12v12h-12z" fill="#00c832"/>
        <path d="M1223 664v8M1289 496l10-10M1582 631h8M1586 631v-8" stroke="#143c1c" stroke-width="1.500"/><circle cx="1294" cy="492" r="2.500" fill="#2a7cf0"/><path d="M1290 487l9 9" stroke="#2a6cc0"/>
        <path d="M1368 684h12v12h-12z" fill="#d8d800"/><path d="M1370 690h8" stroke="#333"/>
        <path d="M1017 439h12v12h-12z" fill="#e60000"/><path d="M1019 443h8M1019 447h8" stroke="#400"/>
        <text x="745" y="409">16</text><text x="773" y="409">27</text><text x="784" y="481">16</text><text x="740" y="528">28</text><text x="701" y="699">27</text><text x="729" y="699">15</text><text x="781" y="692">15</text><text x="870" y="677">26</text><text x="856" y="708">28</text><text x="1152" y="676">26</text><text x="1380" y="724">34</text><text x="1420" y="553">33</text><text x="1601" y="694">34</text><text x="1587" y="727">33</text>
      </g>
      <g class="dims">
        <text x="1066" y="248">245</text><text x="1417" y="292">88,40</text><text x="1354" y="881">110</text><text x="1524" y="787">55</text><text x="1505" y="815">83</text>
        <text x="630" y="537">11,60</text><text x="1206" y="382">R100</text><text x="558" y="790">2xR23,50</text>
        <text x="936" y="372">24</text><text x="1434" y="513">21</text><text x="1511" y="551">20</text><text x="892" y="787">22 g6</text><text x="1663" y="789">PIGE</text><text x="1732" y="789">18</text>
        <text transform="translate(547 539) rotate(-90)">53</text><text transform="translate(548 659) rotate(-90)">20</text><text transform="translate(1234 655) rotate(-90)">8</text><text transform="translate(1660 662) rotate(-90)">21</text><text transform="translate(1694 662) rotate(-90)">21</text><text transform="translate(1730 658) rotate(-90)">28</text>
        <text transform="translate(1229 546) rotate(9)">28°</text><text transform="translate(1753 519) rotate(48)">65°</text><text class="conflict" transform="translate(485 475) rotate(-86)">12°</text>
        <g class="tol"><text x="956" y="769">-0,007</text><text x="956" y="788">-0,020</text></g>
      </g>
      <g class="dia"><circle cx="912" cy="363.500" r="8"/><path d="M908 374l8-21"/><circle cx="1412" cy="504.500" r="8"/><path d="M1408 515l8-21"/><circle cx="1488" cy="542.500" r="8"/><path d="M1484 553l8-21"/><circle cx="853" cy="779" r="8"/><path d="M849 789l8-21"/><circle cx="1707" cy="780.500" r="8"/><path d="M1703 791l8-21"/></g>
      <g class="triad"><path d="M435.500 915v-22h-3l5-11 5 11h-3v22z" fill="#2f7d2a" stroke="#123d10"/><path d="M438 916.500h25v-3l12 6-12 6v-3h-25z" fill="#d83030" stroke="#701010"/><circle cx="438" cy="920" r="6" fill="#10209c"/><text x="438" y="880" fill="#187818">Y</text><text x="480" y="925" fill="#e01818">X</text></g>
      <text class="face-label" x="399" y="983">*Face</text>
    </svg>
    <div class="splitter"><i class="dot"></i></div>
    <div class="viewbar">
      <button><svg><use href="#vfit"/></svg></button><button><svg><use href="#varea"/></svg></button><button><svg><use href="#vprev"/></svg></button><button><svg><use href="#vsect"/></svg></button><button><svg><use href="#vdyn"/></svg></button><button><svg><use href="#vorient"/></svg></button><button class="dd"><svg><use href="#dd"/></svg></button>
      <button><svg><use href="#vsel"/></svg></button><button><svg><use href="#vnorm"/></svg></button><button><svg><use href="#vcube"/></svg></button><button class="dd"><svg><use href="#dd"/></svg></button>
      <button><svg><use href="#veye"/></svg></button><button class="dd"><svg><use href="#dd"/></svg></button>
      <button><svg><use href="#vpen"/></svg></button><button><svg><use href="#vscene"/></svg></button><button class="dd"><svg><use href="#dd"/></svg></button>
      <button><svg><use href="#vapp"/></svg></button><button class="dd"><svg><use href="#dd"/></svg></button>
      <button class="pressed"><svg><use href="#vball"/></svg></button><button><svg><use href="#vgray"/></svg></button><button><svg><use href="#vpersp"/></svg></button><button><svg><use href="#vcam"/></svg></button>
    </div>
    <dl class="legend"><dt class="red"></dt><dd>Objet impossible à résoudre</dd><dt class="yel"></dt><dd>Conflits d'objets</dd></dl>
  </section>
</main>

<footer>
  <nav class="sheets">
    <div class="nav4"><button><svg viewBox="0 0 12 12"><path d="M2 0v12M10 0v12L4 6z" fill="#8488a0" stroke="#8488a0"/></svg></button><button><svg viewBox="0 0 12 12"><path d="M9 0v12L2 6z" fill="#8488a0"/></svg></button><button><svg viewBox="0 0 12 12"><path d="M3 0v12l7-6z" fill="#8488a0"/></svg></button><button><svg viewBox="0 0 12 12"><path d="M10 0v12M2 0v12l6-6z" fill="#8488a0" stroke="#8488a0"/></svg></button></div>
    <button class="on">Modèle</button><button>Vues 3D</button><button>Etude de mouvement 1</button><button>Motion Study 1</button>
  </nav>
  <div class="status">
    <span class="edition">SOLIDWORKS Premium 2017 x64 Edition</span>
    <span class="coord c89">33.08mm</span><span class="coord c89">137.61mm</span><span class="coord c56">0mm</span>
    <a class="over" href="#"><svg><use href="#warn"/></svg>Sur-contrainte
      <span class="tip" role="tooltip"><b>Sur-contrainte</b>L'esquisse est sur-contrainte. Cliquez ici pour résoudre le conflit.</span></a>
    <span class="edit">Edition: E_Base</span>
    <button class="units"><span>Personnalisé</span><svg viewBox="0 0 6 4"><path d="M0 4h6L3 0z" fill="#333"/></svg></button>
    <button class="tags"><svg><use href="#tag"/></svg></button>
  </div>
</footer>
</body>
</html>
```
FILE: styles.css
```css
* { box-sizing: border-box; }
html, body { height: 100%; margin: 0; }
body {
  display: flex; flex-direction: column; overflow: hidden;
  background: #f7f7f7; color: #111;
  font: 13px/20px "Open Sans", "Noto Sans", sans-serif;
}
button { border: 0; padding: 0; margin: 0; background: none; font: inherit; color: inherit; }
a { color: inherit; text-decoration: none; }
svg { display: block; flex: none; }
.defs { position: absolute; width: 0; height: 0; }
.dd { display: flex; align-items: center; justify-content: center; color: #444; }
.dd svg { width: 6px; height: 4px; }

/* title bar */
.titlebar { position: relative; display: flex; height: 33px; flex: none; background: #e6e6e6; border-bottom: 1px solid #888; }
.logo { z-index: 1; display: flex; align-items: center; width: 145px; height: 37px; margin-left: 10px; padding-left: 5px; background: linear-gradient(165deg, #fff, #f4f4f4 60%, #ddd); border: 1px solid #888; border-top: 0; }
.ds { width: 28px; height: 32px; }
.wordmark { margin: 4px 0 0 3px; color: #d9261c; font: italic 400 17px/20px "Open Sans", sans-serif; }
.wordmark b { font-weight: 800; }
.flyout { display: flex; align-items: center; justify-content: center; width: 21px; border-right: 1px solid #999; }
.flyout svg { width: 7px; height: 13px; }
.quick { display: flex; align-items: center; margin-left: 30px; }
.quick button { display: flex; align-items: center; justify-content: center; width: 22px; height: 26px; }
.quick button svg { width: 20px; height: 20px; }
.quick .dd { width: 17px; }
.quick .dd svg { width: 6px; height: 4px; }
.quick .solo { width: 26px; }
.quick .pressed { width: 26px; background: #b0b0b0; border: 1px solid #777; }
.quick .boxed { width: 13px; border: 1px solid #999; border-left: 0; }
.doc { flex: 1; margin: 0; padding-left: 306px; font-size: 13px; font-weight: 400; line-height: 33px; white-space: nowrap; }
.search { display: flex; align-items: center; width: 331px; height: 29px; margin-top: 2px; background: #f7f7f7; border: 1px solid #bbb; }
.prompt { width: 15px; height: 15px; margin: 0 10px 0 5px; }
.search input { flex: 1; min-width: 0; height: 25px; padding: 0 2px; border: 0; background: #e9ebf0; color: #555; font: inherit; }
.search input::placeholder { color: #666; opacity: 1; }
.go svg { width: 24px; height: 24px; margin-left: 4px; }
.search .dd { width: 18px; }
.winbtns { display: flex; align-items: center; width: 147px; padding-left: 5px; color: #333; }
.winbtns button { display: flex; align-items: center; justify-content: center; width: 26px; height: 24px; }
.winbtns button svg { width: 15px; height: 15px; }
.winbtns .dd { width: 13px; }
.winbtns .dd svg { width: 6px; height: 4px; }
.winbtns .help { font-size: 18px; font-weight: 700; }

/* ribbon */
.ribbon { display: flex; flex: none; height: 86px; padding: 6px 0 1px 6px; background: #f7f7f7; white-space: nowrap; }
.ribbon .ic { width: 20px; height: 20px; }
.more, .arrow { width: 6px; height: 4px; color: #333; }
.tool { display: flex; flex-direction: column; align-items: center; flex: none; height: 78px; padding-top: 5px; }
.tool .more { margin-top: 20px; }
.tool.two { padding-top: 12px; line-height: 19px; }
.quit { width: 61px; border: 1px solid #888; background: linear-gradient(#b2b2b2 57px, #888 57px, #888 58px, #f7f7f7 58px); padding-top: 4px; }
.w62 { width: 62px; } .w67 { width: 67px; } .w71 { width: 71px; } .w92 { width: 92px; } .w94 { width: 94px; }
.w117 { width: 117px; } .w122 { width: 122px; } .w134 { width: 134px; } .w202 { width: 202px; }
.off { color: #b8b8b8; }
.active { background: #b2b2b2; border: 1px solid #666; padding-top: 11px; }
.last { border-right: 1px solid #c4c4c4; }
.palette { display: grid; grid-template-columns: 40px 40px 40px 25px; grid-auto-rows: 26px; padding-left: 5px; border: solid #c4c4c4; border-width: 0 1px; }
.palette button { display: flex; align-items: center; gap: 7px; }
.rows { display: flex; flex-direction: column; width: 242px; padding-left: 1px; border-right: 1px solid #c4c4c4; }
.rows button { display: flex; align-items: center; height: 26px; gap: 5px; }
.rows .arrow { margin: 0 6px 0 auto; }

/* command tabs */
.tabs { display: flex; justify-content: space-between; flex: none; height: 29px; background: #fff; border-top: 1px solid #888; font-size: 14px; }
.strip { display: grid; grid-template-columns: 83px 80px 75px 61px 173px 142px 67px 82px 237px 91px 153px 182px 93px 144px; background: #d6d6d6; border-bottom: 1px solid #888; white-space: nowrap; }
.strip button { border-right: 1px solid #888; }
.strip .on { margin-bottom: -1px; background: #f7f7f7; font-weight: 700; }
.docbtns { display: flex; align-items: center; padding-right: 8px; color: #aaa; }
.docbtns button { display: flex; justify-content: center; width: 26px; }
.docbtns svg { width: 14px; height: 14px; }

/* feature manager */
.work { display: flex; flex: 1; min-height: 0; }
.panel { width: 388px; flex: none; background: #f7f7f7; border-right: 1px solid #888; font-family: "Noto Sans", "Open Sans", sans-serif; font-size: 14px; }
.dot { display: block; width: 6px; height: 6px; border-radius: 50%; background: #ccc; border: 1px solid #999; }
.grip { display: flex; align-items: center; justify-content: center; height: 16px; margin: 2px 2px 0 0; border: solid #c4c4c4; border-width: 1px 0; }
.ptabs { display: flex; height: 27px; margin: 4px 2px 0 0; border-bottom: 1px solid #aaa; }
.ptabs button { display: flex; align-items: center; justify-content: center; width: 40px; height: 26px; background: #d4d4d4; border: solid #888; border-width: 1px 1px 1px 0; }
.ptabs .on { background: #f7f7f7; border-bottom: 0; }
.ptabs svg { width: 18px; height: 18px; }
.ptabs .next { width: 16px; margin-left: auto; background: none; border: 0; }
.ptabs .next svg { width: 7px; height: 12px; }
.filter { display: flex; align-items: center; height: 32px; margin: 0 3px; padding-left: 2px; border: 1px solid #c4c4c4; }
.filter svg { width: 18px; height: 18px; }
.filter input { flex: 1; height: 28px; border: 0; background: none; font: inherit; }
.root { display: flex; align-items: center; gap: 4px; height: 24px; margin-right: 2px; padding-left: 3px; border-bottom: 2px solid #a9a9c8; white-space: nowrap; }
.root svg, .tree svg { width: 18px; height: 18px; }
.tree { list-style: none; margin: 0 2px 0 0; padding: 0; border-bottom: 3px solid #a9a9c8; }
.tree li { display: flex; align-items: center; gap: 5px; height: 24px; padding-left: 25px; }
.tree .exp { padding-left: 8px; }
.tree .exp::before { content: ""; width: 0; border: solid transparent; border-width: 4px 0 4px 4px; border-left-color: #555; margin-right: 8px; }
.tree .off { color: #888; }

/* graphics area */
.canvas { position: relative; flex: 1; background: #fff; }
.drawing { width: 100%; height: 100%; }
.drawing text { font-family: "Lato", "Open Sans", sans-serif; }
.face { fill: #eeeeb4; }
.yellow { fill: none; stroke: #d8d800; }
.thin { fill: none; stroke: #111; }
.thin .brown { stroke: #3c2414; stroke-width: 2; }
.thin .grey { stroke: #555; }
.thick { fill: none; stroke: #000; stroke-width: 2; }
.dims { font-size: 21px; text-anchor: middle; fill: #000; stroke: #000; stroke-width: 1px; }
.dims .conflict { fill: #d8d800; stroke: #d8d800; }
.tol { font-size: 16px; }
.dia { fill: none; stroke: #111; }
.badges text { font-size: 12px; font-weight: 900; }
.triad text { font-size: 14px; text-anchor: middle; }
.face-label { font-size: 18px; font-weight: 500; }
.splitter { position: absolute; left: -1px; top: 381px; display: flex; align-items: center; justify-content: center; width: 12px; height: 48px; background: #f7f7f7; border: 1px solid #888; border-left: 0; }
.viewbar { position: absolute; left: 507px; top: 2px; display: flex; align-items: center; }
.viewbar button { display: flex; align-items: center; justify-content: center; width: 26px; height: 26px; }
.viewbar button svg { width: 19px; height: 19px; }
.viewbar .dd { width: 14px; color: #999; }
.viewbar .dd svg { width: 6px; height: 4px; }
.viewbar .pressed { background: #a8a8a8; border: 1px solid #555; }
.legend { position: absolute; right: 8px; bottom: 0; display: grid; grid-template-columns: 19px auto; column-gap: 5px; margin: 0; padding: 4px 6px 4px 4px; background: #dadce4; line-height: 19px; white-space: nowrap; }
.legend dt { border: 1px solid #111; }
.legend dd { margin: 0; }
.red { background: #f00; }
.yel { background: #d8d800; }

/* footer */
footer { flex: none; }
.sheets { display: flex; height: 21px; background: #f7f7f7; border: solid #888; border-width: 1px 0; font-size: 15px; line-height: 18px; }
.sheets > button { padding-bottom: 2px; background: #d6d6d6; border-right: 1px solid #888; line-height: 17px; white-space: nowrap; }
.sheets > button:nth-of-type(1) { width: 85px; background: #f7f7f7; font-weight: 700; }
.sheets > button:nth-of-type(2) { width: 80px; }
.sheets > button:nth-of-type(3) { width: 196px; }
.sheets > button:nth-of-type(4) { width: 144px; padding-right: 10px; }
.nav4 { display: flex; width: 83px; background: #b0b3c6; }
.nav4 button { display: flex; align-items: center; justify-content: center; flex: 1; border: 1px solid #8488a0; }
.nav4 svg { width: 11px; height: 11px; }
.status { display: flex; align-items: center; height: 21px; padding-top: 2px; background: #e6e6e6; font-family: "Noto Sans", "Open Sans", sans-serif; font-size: 14px; line-height: 18px; white-space: nowrap; }
.edition { flex: 1; padding-left: 1px; }
.c89 { width: 89px; }
.c56 { width: 56px; }
.over { position: relative; display: flex; align-items: center; gap: 1px; width: 118px; color: #f00; border-right: 1px solid #ccc; }
.over > svg { width: 16px; height: 16px; }
.tip { position: absolute; left: -203px; bottom: 29px; width: 276px; height: 71px; padding: 4px 20px 4px 7px; background: #fff; border: 1px solid #aaa; color: #222; font-family: "Open Sans", sans-serif; line-height: 20px; white-space: normal; }
.tip b { display: block; color: #000; font-size: 13px; }
.tip::after { content: ""; position: absolute; left: 250px; bottom: -6px; width: 10px; height: 10px; background: #fff; border: solid #aaa; border-width: 0 1px 1px 0; transform: rotate(45deg); }
.edit { width: 108px; padding-left: 9px; border-right: 1px solid #ccc; }
.units { display: flex; align-items: center; justify-content: space-between; width: 180px; padding-left: 65px; }
.units svg { width: 6px; height: 4px; }
.tags { width: 86px; display: flex; justify-content: flex-end; padding-right: 2px; }
.tags svg { width: 16px; height: 16px; }
```
